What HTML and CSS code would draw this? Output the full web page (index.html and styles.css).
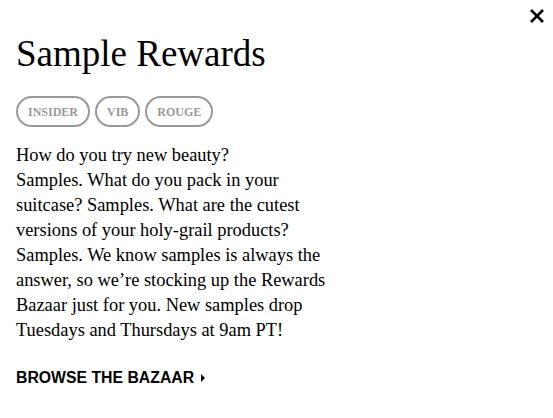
FILE: index.html
```html
<!DOCTYPE html>
<html lang="en">
<head>
    <meta charset="UTF-8">
    <title>Sample Rewards</title>
    <link rel="stylesheet" href="styles.css">
</head>
<body>
    <div class="modal">
        <a href="javascript:void(0);" class="close-btn" aria-label="Close">
            <svg width="16" height="16" viewBox="0 0 16 16"><path d="M2 2L14 14M14 2L2 14" stroke="#000" stroke-width="2.6" fill="none"/></svg>
        </a>
        <h1 class="modal-title">Sample Rewards</h1>
        <div class="tiers">
            <span class="tier">INSIDER</span>
            <span class="tier">VIB</span>
            <span class="tier">ROUGE</span>
        </div>
        <p class="modal-text">How do you try new beauty?<br>Samples. What do you pack in your suitcase? Samples. What are the cutest versions of your holy-grail products? Samples. We know samples is always the answer, so we’re stocking up the Rewards Bazaar just for you. New samples drop Tuesdays and Thursdays at 9am PT!</p>
        <a href="javascript:void(0);" class="browse-link">BROWSE THE BAZAAR<span class="arrow"></span></a>
    </div>
</body>
</html>
```

FILE: styles.css
```css
body {
    margin: 0;
    background: #fff;
    color: #000;
}
.modal {
    position: relative;
    padding: 34px 16px 0 16px;
}
.close-btn {
    position: absolute;
    top: 8px;
    right: 8px;
    display: block;
    width: 16px;
    height: 16px;
}
.close-btn svg {
    display: block;
}
.modal-title {
    margin: 0;
    font-family: "Liberation Serif", serif;
    font-weight: normal;
    font-size: 37px;
    line-height: 40px;
}
.tiers {
    display: flex;
    gap: 5px;
    margin-top: 22px;
}
.tier {
    display: block;
    border: 2px solid #999;
    border-radius: 16px;
    padding: 0 10px;
    height: 27px;
    line-height: 28px;
    font-family: "Liberation Serif", serif;
    font-weight: bold;
    font-size: 12px;
    color: #999;
}
.modal-text {
    margin: 16px 0 0 0;
    width: 322px;
    font-family: "Liberation Serif", serif;
    font-size: 18.4px;
    line-height: 25px;
}
.browse-link {
    display: inline-flex;
    align-items: center;
    margin-top: 26px;
    font-family: "Liberation Sans", sans-serif;
    font-weight: bold;
    font-size: 15.8px;
    color: #000;
    text-decoration: none;
}
.arrow {
    display: inline-block;
    margin-left: 7px;
    border-left: 4px solid #000;
    border-top: 4px solid transparent;
    border-bottom: 4px solid transparent;
}
```
